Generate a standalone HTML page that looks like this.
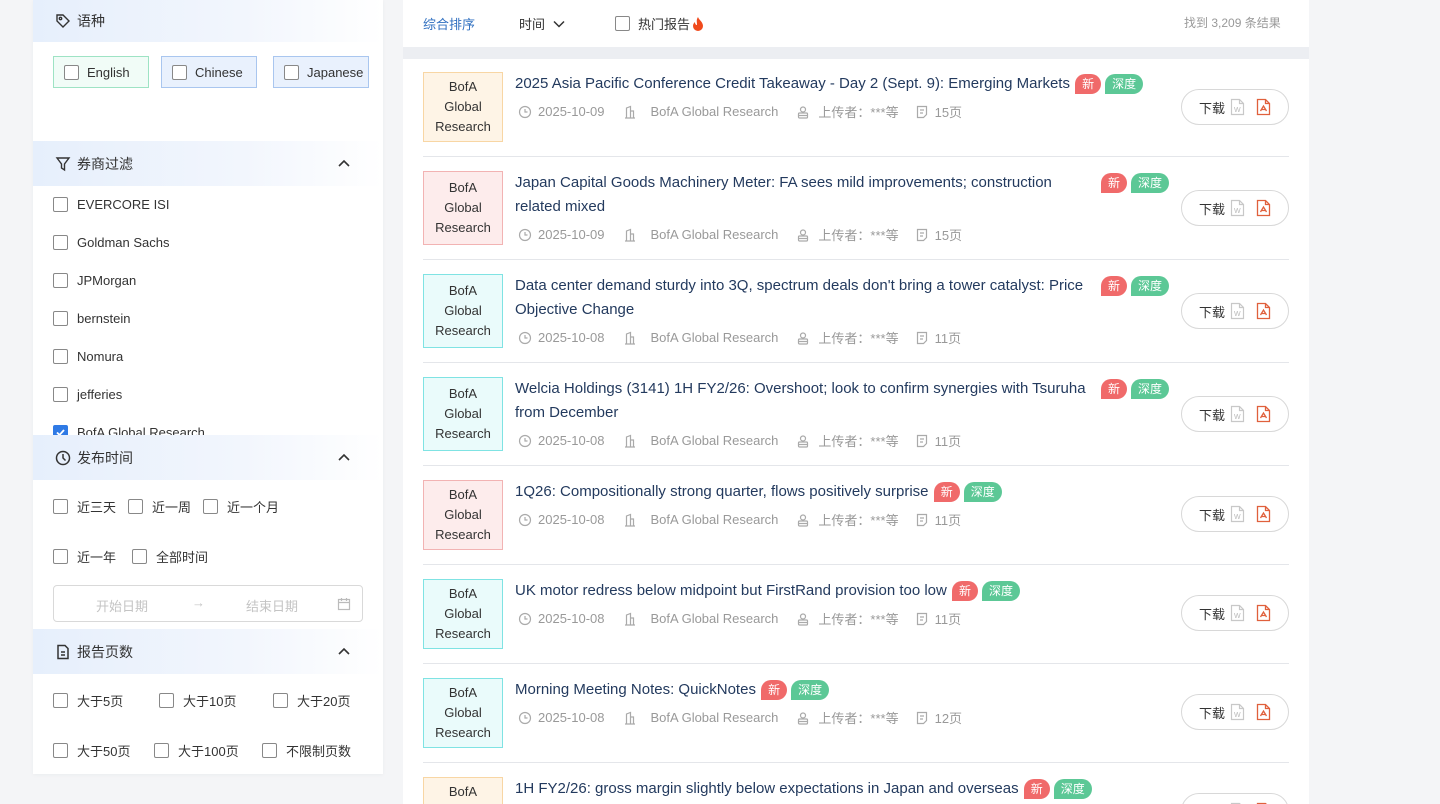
<!DOCTYPE html>
<html><head><meta charset="utf-8"><style>
*{margin:0;padding:0;box-sizing:border-box}
html,body{width:1440px;height:804px;overflow:hidden}
body{background:#f4f5f7;font-family:"Liberation Sans","Noto Sans CJK SC",sans-serif;position:relative;color:#333}
.a{position:absolute}
.side{left:33px;top:0;width:350px;height:774px;background:#fff;box-shadow:0 1px 4px rgba(0,0,0,.04)}
.hd{position:absolute;left:0;width:350px;height:45px;background:linear-gradient(90deg,#e6effc 0%,#f2f6fd 60%,#fff 100%);font-size:14px;color:#333;display:flex;align-items:center;padding-left:22px}
.hd svg{margin-right:6px}
.hd .car{position:absolute;right:26px;top:15px}
.cb{display:inline-block;width:15px;height:15px;border:1px solid #888;border-radius:2px;background:#fff;vertical-align:middle;flex:none}
.it{position:absolute;font-size:13px;color:#333;display:flex;align-items:center;gap:9px}
.lang{position:absolute;top:56px;height:32px;border:1px solid;display:flex;align-items:center;padding-left:10px;gap:8px;font-size:13px;color:#333}
.main{left:403px;top:0;width:906px;height:804px;background:#fff;overflow:hidden}
.gap{left:0;top:47px;width:906px;height:12px;background:#eceef2}
.row{position:absolute;left:20px;width:866px;border-bottom:1px solid #e4e6ea}
.logo{position:absolute;left:0;width:80px;border:1px solid;font-size:13px;color:#333;text-align:center;line-height:20px;display:flex;align-items:center;justify-content:center}
.o{background:#fef4e6;border-color:#f8d6a4}
.r{background:#fdecec;border-color:#f2b3b3}
.c{background:#eafbfb;border-color:#7fe3e3}
.ti{position:absolute;left:92px;font-size:15px;color:#233a5e;line-height:24px}
.meta{position:absolute;left:95px;font-size:13px;color:#999;display:flex;align-items:center;white-space:nowrap}
.meta span{display:inline-flex;align-items:center}
.tag{display:inline-block;height:20px;line-height:20px;font-size:12px;color:#fff;padding:0 7px;border-radius:10px 10px 10px 0;vertical-align:middle;margin-left:4px}
.tag.n{margin-left:1px}
.tags .tag.n{margin-left:0}
.n{background:#f06a6a}.d{background:#5cc896}
.tags{position:absolute}
.btn{position:absolute;left:758px;width:108px;height:36px;border:1px solid #d8d8d8;border-radius:18px;font-size:13px;color:#333;display:flex;align-items:center;padding-left:17px;gap:5px}
</style></head><body>

<div class="a side">
  <div class="hd" style="top:0;height:42px"><svg width="16" height="16" viewBox="0 0 16 16" fill="none" stroke="#333" stroke-width="1.4"><path d="M2 2h6l6 6-6 6-6-6z"/><circle cx="5.5" cy="5.5" r="1.2"/></svg>语种</div>
  <div class="lang" style="left:20px;width:96px;border-color:#9ee3c4;background:#f1fcf7"><span class="cb"></span>English</div>
  <div class="lang" style="left:128px;width:96px;border-color:#a9c6ef;background:#e9f1fd"><span class="cb"></span>Chinese</div>
  <div class="lang" style="left:240px;width:96px;border-color:#a9c6ef;background:#e9f1fd"><span class="cb"></span>Japanese</div>

  <div class="hd" style="top:141px"><svg width="16" height="16" viewBox="0 0 16 16" fill="none" stroke="#333" stroke-width="1.4"><path d="M2 2h12l-4.5 6v6l-3-2v-4z"/></svg>券商过滤<svg class="car" width="14" height="14" viewBox="0 0 14 14" fill="none" stroke="#333" stroke-width="1.6"><path d="M2 10l5-5 5 5"/></svg></div>
  <div class="it" style="left:20px;top:197px"><span class="cb"></span>EVERCORE ISI</div>
  <div class="it" style="left:20px;top:235px"><span class="cb"></span>Goldman Sachs</div>
  <div class="it" style="left:20px;top:273px"><span class="cb"></span>JPMorgan</div>
  <div class="it" style="left:20px;top:311px"><span class="cb"></span>bernstein</div>
  <div class="it" style="left:20px;top:349px"><span class="cb"></span>Nomura</div>
  <div class="it" style="left:20px;top:387px"><span class="cb"></span>jefferies</div>
  <div class="it" style="left:20px;top:425px;height:10px;overflow:hidden;align-items:flex-start"><span class="cb" style="background:#2f7ae5;border-color:#2f7ae5;position:relative"><svg width="13" height="13" viewBox="0 0 13 13" style="position:absolute;left:0;top:0"><path d="M3 6.5l2.5 2.5 4.5-5" stroke="#fff" stroke-width="1.8" fill="none"/></svg></span>BofA Global Research</div>

  <div class="hd" style="top:435px"><svg width="16" height="16" viewBox="0 0 16 16" fill="none" stroke="#333" stroke-width="1.5"><circle cx="8" cy="8" r="6.5"/><path d="M8 4v4l2.5 2.5"/></svg>发布时间<svg class="car" width="14" height="14" viewBox="0 0 14 14" fill="none" stroke="#333" stroke-width="1.6"><path d="M2 10l5-5 5 5"/></svg></div>
  <div class="it" style="left:20px;top:497px"><span class="cb"></span>近三天</div>
  <div class="it" style="left:95px;top:497px"><span class="cb"></span>近一周</div>
  <div class="it" style="left:170px;top:497px"><span class="cb"></span>近一个月</div>
  <div class="it" style="left:20px;top:547px"><span class="cb"></span>近一年</div>
  <div class="it" style="left:99px;top:547px"><span class="cb"></span>全部时间</div>
  <div class="a" style="left:20px;top:585px;width:310px;height:37px;border:1px solid #d9d9d9;border-radius:4px;font-size:13px;color:#c4c4c4">
    <span class="a" style="left:42px;top:10px">开始日期</span><span class="a" style="left:138px;top:9px">→</span><span class="a" style="left:192px;top:10px">结束日期</span>
    <svg class="a" style="left:283px;top:11px" width="14" height="14" viewBox="0 0 14 14" fill="none" stroke="#bbb" stroke-width="1.2"><rect x="1.5" y="2.5" width="11" height="10"/><path d="M1.5 5.5h11M4.5 1v3M9.5 1v3"/></svg>
  </div>

  <div class="hd" style="top:629px"><svg width="16" height="16" viewBox="0 0 16 16" fill="none" stroke="#333" stroke-width="1.5"><path d="M3 1.5h7l3 3v10H3z"/><path d="M6 8h4M6 11h4"/></svg>报告页数<svg class="car" width="14" height="14" viewBox="0 0 14 14" fill="none" stroke="#333" stroke-width="1.6"><path d="M2 10l5-5 5 5"/></svg></div>
  <div class="it" style="left:20px;top:691px"><span class="cb"></span>大于5页</div>
  <div class="it" style="left:126px;top:691px"><span class="cb"></span>大于10页</div>
  <div class="it" style="left:240px;top:691px"><span class="cb"></span>大于20页</div>
  <div class="it" style="left:20px;top:741px"><span class="cb"></span>大于50页</div>
  <div class="it" style="left:121px;top:741px"><span class="cb"></span>大于100页</div>
  <div class="it" style="left:229px;top:741px"><span class="cb"></span>不限制页数</div>
</div>

<div class="a main">
<div class="a gap"></div>
<div class="a" style="left:20px;top:14px;font-size:13px;color:#2f6fc0">综合排序</div>
<div class="a" style="left:116px;top:14px;font-size:13px;color:#333">时间 <svg width="12" height="10" viewBox="0 0 12 10" fill="none" stroke="#333" stroke-width="1.5" style="margin-left:4px"><path d="M1 2.5l5 5 5-5"/></svg></div>
<div class="a" style="left:212px;top:14px;font-size:13px;color:#333;display:flex;align-items:center;gap:8px"><span class="cb"></span>热门报告<svg width="12" height="14" viewBox="0 0 12 14" style="margin-left:-6px"><path d="M6 0C7 3 11 5 11 9a5 5 0 01-10 0c0-2 1-3 2-4 0 2 1 3 2 3C5 5 4 3 6 0z" fill="#f04a1c"/></svg></div>
<div class="a" style="left:781px;top:14px;font-size:12px;color:#999">找到 3,209 条结果</div>

<div class="row" style="top:59px;height:98px">
 <div class="logo o" style="top:13px;height:70px">BofA<br>Global<br>Research</div>
 <div class="ti" style="top:13px;white-space:nowrap">2025 Asia Pacific Conference Credit Takeaway - Day 2 (Sept. 9): Emerging Markets <span class="tag n">新</span><span class="tag d">深度</span></div>
 <div class="meta" style="top:43px">M</div>
 <div class="btn" style="top:30px">B</div>
</div>
<div class="row" style="top:156px;height:104px">
 <div class="logo r" style="top:15px;height:74px">BofA<br>Global<br>Research</div>
 <div class="ti" style="top:15px;width:580px">Japan Capital Goods Machinery Meter: FA sees mild improvements; construction related mixed</div>
 <div class="tags" style="left:678px;top:17px"><span class="tag n">新</span><span class="tag d">深度</span></div>
 <div class="meta" style="top:69px">M</div>
 <div class="btn" style="top:34px">B</div>
</div>
<div class="row" style="top:259px;height:104px">
 <div class="logo c" style="top:15px;height:74px">BofA<br>Global<br>Research</div>
 <div class="ti" style="top:15px;width:580px">Data center demand sturdy into 3Q, spectrum deals don't bring a tower catalyst: Price Objective Change</div>
 <div class="tags" style="left:678px;top:17px"><span class="tag n">新</span><span class="tag d">深度</span></div>
 <div class="meta" style="top:69px">M</div>
 <div class="btn" style="top:34px">B</div>
</div>
<div class="row" style="top:362px;height:104px">
 <div class="logo c" style="top:15px;height:74px">BofA<br>Global<br>Research</div>
 <div class="ti" style="top:15px;width:580px">Welcia Holdings (3141) 1H FY2/26: Overshoot; look to confirm synergies with Tsuruha from December</div>
 <div class="tags" style="left:678px;top:17px"><span class="tag n">新</span><span class="tag d">深度</span></div>
 <div class="meta" style="top:69px">M</div>
 <div class="btn" style="top:34px">B</div>
</div>
<div class="row" style="top:465px;height:100px">
 <div class="logo r" style="top:15px;height:70px">BofA<br>Global<br>Research</div>
 <div class="ti" style="top:15px;white-space:nowrap">1Q26: Compositionally strong quarter, flows positively surprise <span class="tag n">新</span><span class="tag d">深度</span></div>
 <div class="meta" style="top:45px">M</div>
 <div class="btn" style="top:31px">B</div>
</div>
<div class="row" style="top:564px;height:100px">
 <div class="logo c" style="top:15px;height:70px">BofA<br>Global<br>Research</div>
 <div class="ti" style="top:15px;white-space:nowrap">UK motor redress below midpoint but FirstRand provision too low <span class="tag n">新</span><span class="tag d">深度</span></div>
 <div class="meta" style="top:45px">M</div>
 <div class="btn" style="top:31px">B</div>
</div>
<div class="row" style="top:663px;height:100px">
 <div class="logo c" style="top:15px;height:70px">BofA<br>Global<br>Research</div>
 <div class="ti" style="top:15px;white-space:nowrap">Morning Meeting Notes: QuickNotes <span class="tag n">新</span><span class="tag d">深度</span></div>
 <div class="meta" style="top:45px">M</div>
 <div class="btn" style="top:31px">B</div>
</div>
<div class="row" style="top:762px;height:42px;border:none;overflow:hidden">
 <div class="logo o" style="top:15px;height:70px">BofA<br>Global<br>Research</div>
 <div class="ti" style="top:15px;white-space:nowrap">1H FY2/26: gross margin slightly below expectations in Japan and overseas <span class="tag n">新</span><span class="tag d">深度</span></div>
 <div class="btn" style="top:31px">B</div>
</div>
</div>

<script>
var dates=["2025-10-09","2025-10-09","2025-10-08","2025-10-08","2025-10-08","2025-10-08","2025-10-08"];
var pages=["15页","15页","11页","11页","11页","11页","12页"];
var clock='<svg width="14" height="14" viewBox="0 0 14 14" fill="none" stroke="#aaa" stroke-width="1.2"><circle cx="7" cy="7" r="5.5"/><path d="M7 4v3h2.5"/></svg>';
var bld='<svg width="14" height="14" viewBox="0 0 14 14" fill="none" stroke="#aaa" stroke-width="1.2"><path d="M2 13h10M3.5 13V3l4-1.5V13M7.5 6h3v7"/></svg>';
var usr='<svg width="14" height="14" viewBox="0 0 14 14" fill="none" stroke="#aaa" stroke-width="1.2"><circle cx="7" cy="4.5" r="2.5"/><rect x="2.5" y="8" width="9" height="5" rx="1"/><path d="M2.5 10.5h9"/></svg>';
var doc='<svg width="14" height="14" viewBox="0 0 14 14" fill="none" stroke="#aaa" stroke-width="1.2"><path d="M2.5 1.5h9v8l-3 3h-6z"/><path d="M5 5h4M5 8h3"/></svg>';
document.querySelectorAll('.meta').forEach(function(m,i){
 m.innerHTML='<span style="gap:6px">'+clock+dates[i]+'</span><span style="margin-left:18px;gap:14px">'+bld+'BofA Global Research</span><span style="margin-left:18px;gap:8px">'+usr+'上传者：***等</span><span style="margin-left:16px;gap:6px">'+doc+pages[i]+'</span>';
});
var w='<svg width="15" height="18" viewBox="0 0 15 18" fill="none" stroke="#c8c8c8" stroke-width="1.2"><path d="M1.5 1.5h8l4 4v11h-12z M9.5 1.5v4h4"/><text x="4" y="14" font-size="7" fill="#b8b8b8" stroke="none" font-family="Liberation Sans">W</text></svg>';
var p='<svg width="15" height="18" viewBox="0 0 15 18" fill="none" stroke="#e0603c" stroke-width="1.3"><path d="M1.5 1.5h8l4 4v11h-12z M9.5 1.5v4h4"/><path d="M4.5 13l3-5 3 5M5.5 11.5h4"/></svg>';
document.querySelectorAll('.btn').forEach(function(b){b.innerHTML='下载'+w+'<span style="width:1px"></span>'+p;});
</script>
</body></html>
